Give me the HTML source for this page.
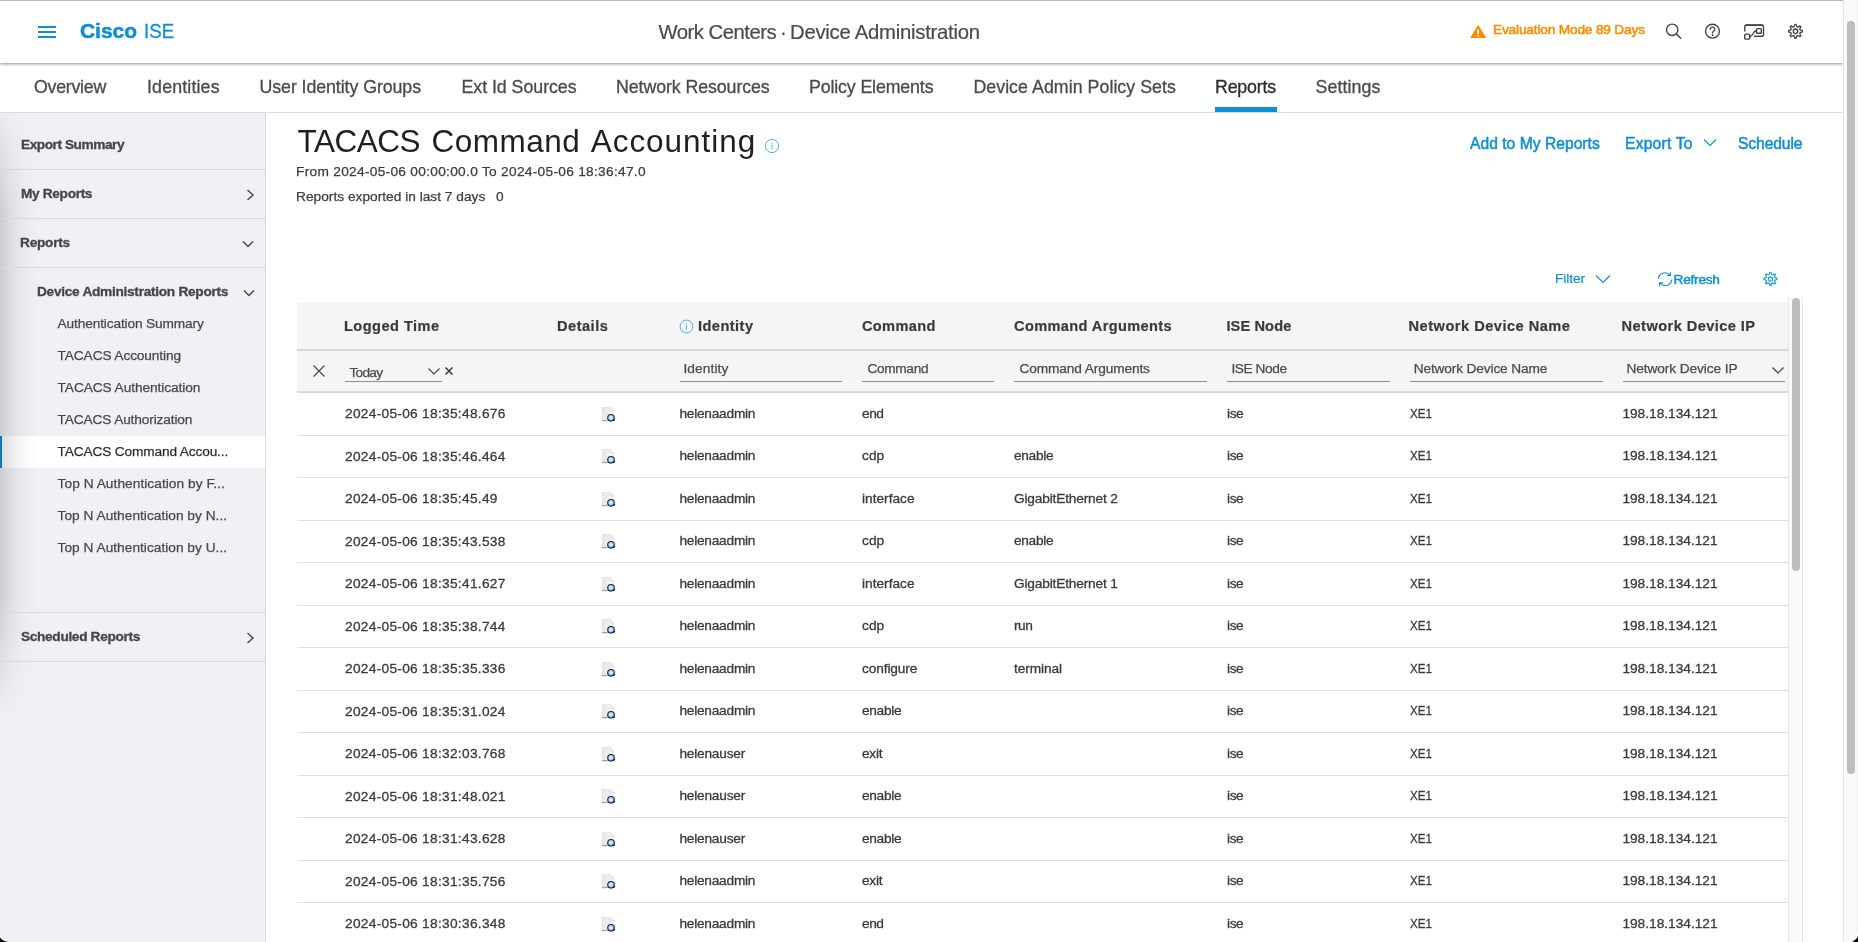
<!DOCTYPE html>
<html lang="en">
<head>
<meta charset="utf-8">
<title>Cisco ISE - TACACS Command Accounting</title>
<style>
*{box-sizing:border-box;margin:0;padding:0}
html,body{width:1858px;height:942px;overflow:hidden;background:#fff}
body{font-family:"Liberation Sans",Arial,sans-serif;color:#3c3c3c;position:relative;font-size:13.7px}
.abs{position:absolute;white-space:nowrap}
#page{position:absolute;left:0;top:0;width:1843px;height:942px;overflow:hidden;background:#fff;will-change:transform}
/* header */
#hdr{position:absolute;left:0;top:0;width:1843px;height:63px;background:#fff;border-top:1px solid #b9b9b9;box-shadow:0 1px 3px rgba(0,0,0,.45);z-index:5}
#tabs{position:absolute;left:0;top:63px;width:1843px;height:50px;background:#fff;border-bottom:1px solid #dcdcdc;z-index:2}
.wc{top:19.7px;font-size:20.3px;line-height:22px;color:#4a4a4a;-webkit-text-stroke:.2px #4a4a4a}
.tab{position:absolute;top:14px;font-size:17.8px;line-height:20px;color:#4a4a4a;white-space:nowrap;-webkit-text-stroke:.3px #4a4a4a}
.tab.act{color:#2b2b2b;-webkit-text-stroke-color:#2b2b2b}
#actbar{position:absolute;left:1215px;top:44px;width:62px;height:5px;background:#0d8fd6}
/* sidebar */
#side{position:absolute;left:0;top:113px;width:266px;height:829px;background:#f0f1f5;border-right:1px solid #d9dadd}
#side .sh{position:absolute;left:0;top:-13px;width:40px;height:620px;background:linear-gradient(to right,rgba(0,0,0,.15),rgba(0,0,0,.065) 30%,rgba(0,0,0,.02) 65%,rgba(0,0,0,0));-webkit-mask-image:linear-gradient(to bottom,transparent 0,#000 18%,#000 80%,transparent 100%);mask-image:linear-gradient(to bottom,transparent 0,#000 18%,#000 80%,transparent 100%)}
.sline{position:absolute;left:0;width:265px;height:1px;background:#d9dadd}
.sb{position:absolute;font-weight:bold;font-size:13.7px;line-height:16px;color:#444549;white-space:nowrap;-webkit-text-stroke:.3px #444549}
.si{position:absolute;left:58px;font-size:13.7px;line-height:16px;color:#47484c;white-space:nowrap;-webkit-text-stroke:.25px #47484c}
#sel{position:absolute;left:0;top:323px;width:265px;height:32px;background:#fff;border-left:2px solid #0d8fd6}
/* main */
.ttl{position:absolute;top:123px;font-size:31.5px;line-height:36px;color:#1f1f1f;white-space:nowrap}
.sub{position:absolute;left:297px;font-size:13.7px;line-height:16px;color:#3c3c3c;white-space:nowrap;-webkit-text-stroke:.25px #3c3c3c}
.lnk{position:absolute;font-size:15.6px;line-height:18px;color:#0d8fd6;white-space:nowrap;-webkit-text-stroke:.5px #0d8fd6}
.lnk2{position:absolute;font-size:13.7px;line-height:16px;color:#0d8fd6;white-space:nowrap;-webkit-text-stroke:.2px #0d8fd6}
/* table */
#thead{position:absolute;left:297px;top:302px;width:1491px;height:49px;background:#f5f5f5;border-bottom:2px solid #d6d6d6}
#tfilt{position:absolute;left:297px;top:351px;width:1491px;height:42px;background:#f5f5f5;border-bottom:2px solid #dadada}
.th{position:absolute;top:317px;font-weight:bold;font-size:14.6px;line-height:18px;color:#3a3a3a;white-space:nowrap;-webkit-text-stroke:.2px #3a3a3a}
.ph{position:absolute;top:361px;font-size:13.7px;line-height:16px;color:#4a4a4a;white-space:nowrap;-webkit-text-stroke:.25px #4a4a4a}
.ul{position:absolute;top:381px;height:1px;background:#8e8e8e}
.row{position:absolute;left:297px;width:1491px;height:1px;background:#dedede}
.c{position:absolute;font-size:13.7px;line-height:16px;color:#3a3a3a;white-space:nowrap;-webkit-text-stroke:.3px #3a3a3a}
.xe{transform:scaleX(.85);transform-origin:0 50%}
.ic{position:absolute;left:601px;width:15px;height:16px}
/* scrollbars */
#vsb{position:absolute;left:1843px;top:0;width:15px;height:942px;background:#fafafa;border-left:1px solid #e4e4e4;border-right:1px solid #f0f0f0}
#vsb i{position:absolute;left:3px;top:21px;width:8px;height:753px;border-radius:4px;background:#bdbdbd}
#isb{position:absolute;left:1788px;top:297px;width:15px;height:645px;background:#fafafa;border-left:1px solid #e6e6e6;border-right:1px solid #e6e6e6}
#isb i{position:absolute;left:3px;top:1px;width:8px;height:273px;border-radius:4px;background:#bdbdbd}
/*LS*/#cisco{letter-spacing:-0.05px}#wc1{letter-spacing:-0.50px}#wc3{letter-spacing:-0.25px}#eval{letter-spacing:-0.18px}#t1{letter-spacing:-0.26px}#t2{letter-spacing:0.15px}#t3{letter-spacing:-0.08px}#t4{letter-spacing:-0.04px}#t5{letter-spacing:-0.09px}#t6{letter-spacing:-0.14px}#t7{letter-spacing:0.04px}#t8{letter-spacing:-0.18px}#t9{letter-spacing:0.08px}#s1{letter-spacing:-0.46px}#s2{letter-spacing:-0.34px}#s3{letter-spacing:-0.25px}#s4{letter-spacing:-0.29px}#s5{letter-spacing:-0.34px}#i1{letter-spacing:-0.14px}#i2{letter-spacing:-0.11px}#i3{letter-spacing:-0.08px}#i4{letter-spacing:-0.14px}#i5{letter-spacing:-0.15px}#i6{letter-spacing:0.05px}#i7{letter-spacing:0.02px}#i8{letter-spacing:0.02px}#tt1{letter-spacing:-0.50px}#tt2{letter-spacing:0.50px}#tt3{letter-spacing:0.97px}#from{letter-spacing:0.30px}#rexp{letter-spacing:0.02px}#l1{letter-spacing:0.04px}#l2{letter-spacing:0.24px}#l3{letter-spacing:-0.08px}#f1{letter-spacing:-0.06px}#f2{letter-spacing:-0.26px}#h1{letter-spacing:0.45px}#h2{letter-spacing:0.49px}#h3{letter-spacing:0.45px}#h4{letter-spacing:0.33px}#h5{letter-spacing:0.36px}#h6{letter-spacing:0.12px}#h7{letter-spacing:0.49px}#h8{letter-spacing:0.43px}#p0{letter-spacing:-0.72px}#p1{letter-spacing:0.12px}#p2{letter-spacing:-0.33px}#p3{letter-spacing:-0.12px}#p4{letter-spacing:-0.41px}#p5{letter-spacing:-0.14px}#p6{letter-spacing:-0.09px}/*LSEND*/
</style>
</head>
<body>
<div id="page">

<!-- HEADER -->
<div id="hdr">
  <svg class="abs" style="left:37px;top:24px" width="20" height="14" viewBox="0 0 20 14"><path d="M1 2h18M1 7h18M1 12h18" stroke="#0d8fd6" stroke-width="2" fill="none"/></svg>
  <div class="abs" id="logo" style="left:80px;top:18px;font-size:21px;line-height:24px;color:#0d8fd6"><b id="cisco" style="-webkit-text-stroke:.5px #0d8fd6">Cisco</b></div>
  <div class="abs" id="ise" style="left:143.800px;top:18px;font-size:21px;line-height:24px;color:#0d8fd6;transform:scaleX(.89);transform-origin:0 50%;-webkit-text-stroke:.3px #0d8fd6">ISE</div>
  <div class="abs wc" id="wc1" style="left:658.5px">Work Centers</div><div class="abs wc" id="wc2" style="left:780px">·</div><div class="abs wc" id="wc3" style="left:790px">Device Administration</div>
  <svg class="abs" style="left:1469.800px;top:23.600px" width="16.400" height="13.700" viewBox="0 0 18 15"><path d="M9 1.2 L16.8 14 H1.2 Z" fill="#fb8c00" stroke="#fb8c00" stroke-width="1.6" stroke-linejoin="round"/><rect x="8.1" y="5" width="1.8" height="5" fill="#fff"/><rect x="8.1" y="11" width="1.8" height="1.8" fill="#fff"/></svg>
  <div class="abs" id="eval" style="left:1493px;top:21px;font-size:13.7px;line-height:16px;color:#fb8c00;-webkit-text-stroke:.55px #fb8c00">Evaluation Mode 89 Days</div>
  <svg class="abs" id="hic" style="left:1655px;top:-1px" width="160" height="63" viewBox="1655 0 160 63" fill="none" stroke="#424242" stroke-linecap="round" stroke-linejoin="round">
    <circle cx="1672.200" cy="29.800" r="5.700" stroke-width="1.400"/><path d="M1676.400 34 L1680.700 38.300" stroke-width="1.500"/>
    <circle cx="1712.500" cy="31.200" r="6.900" stroke-width="1.400"/><path d="M1710.300 29.300 C1710.300 26.500 1714.800 26.500 1714.800 29.200 C1714.800 31 1712.600 31 1712.600 33" stroke-width="1.300"/><circle cx="1712.600" cy="35.200" r=".9" fill="#3c3c3c" stroke="none"/>
    <path d="M1744.800 31 V26.500 Q1744.800 25.200 1746.100 25.200 H1762.200 Q1763.500 25.200 1763.500 26.500 V35 Q1763.500 36.300 1762.200 36.300 H1754.500" stroke-width="1.400"/><path d="M1745.800 24.800 H1762.500" stroke-width="1"/>
    <rect x="1744.700" y="34.100" width="5" height="5" rx="1.200" stroke-width="1.400"/>
    <rect x="1756.500" y="28.600" width="4.800" height="4.700" rx=".9" stroke-width="1.400"/>
    <path d="M1749.800 36.500 C1753.500 36.500 1752.500 30.800 1756.500 30.800" stroke-width="1.400"/>
    <path d="M1794.10 26.71 L1794.89 24.33 L1796.11 24.33 L1796.90 26.71 L1797.75 27.06 L1800.00 25.94 L1800.86 26.80 L1799.74 29.05 L1800.09 29.90 L1802.47 30.69 L1802.47 31.91 L1800.09 32.70 L1799.74 33.55 L1800.86 35.80 L1800.00 36.66 L1797.75 35.54 L1796.90 35.89 L1796.11 38.27 L1794.89 38.27 L1794.10 35.89 L1793.25 35.54 L1791.00 36.66 L1790.14 35.80 L1791.26 33.55 L1790.91 32.70 L1788.53 31.91 L1788.53 30.69 L1790.91 29.90 L1791.26 29.05 L1790.14 26.80 L1791.00 25.94 L1793.25 27.06 Z" stroke-width="1.300"/><circle cx="1795.500" cy="31.300" r="2.300" stroke-width="1.300"/>
  </svg>
</div>

<!-- TABS -->
<div id="tabs">
  <div class="tab" id="t1" style="left:34px">Overview</div>
  <div class="tab" id="t2" style="left:147px">Identities</div>
  <div class="tab" id="t3" style="left:259.5px">User Identity Groups</div>
  <div class="tab" id="t4" style="left:461.5px">Ext Id Sources</div>
  <div class="tab" id="t5" style="left:616px">Network Resources</div>
  <div class="tab" id="t6" style="left:809px">Policy Elements</div>
  <div class="tab" id="t7" style="left:973.4px">Device Admin Policy Sets</div>
  <div class="tab act" id="t8" style="left:1215px">Reports</div>
  <div class="tab" id="t9" style="left:1315.6px">Settings</div>
  <div id="actbar"></div>
</div>

<!-- SIDEBAR -->
<div id="side">
  <div id="sel"></div>
  <div class="sh"></div>
  <div class="sb" id="s1" style="left:21px;top:24px">Export Summary</div>
  <div class="sline" style="top:56px"></div>
  <div class="sb" id="s2" style="left:21px;top:73px">My Reports</div>
  <div class="sline" style="top:105px"></div>
  <div class="sb" id="s3" style="left:20px;top:122px">Reports</div>
  <div class="sline" style="top:154px"></div>
  <div class="sb" id="s4" style="left:37px;top:171px">Device Administration Reports</div>
  <div class="si" id="i1" style="left:57.6px;top:203px">Authentication Summary</div>
  <div class="si" id="i2" style="left:57.6px;top:235px">TACACS Accounting</div>
  <div class="si" id="i3" style="left:57.6px;top:267px">TACACS Authentication</div>
  <div class="si" id="i4" style="left:57.6px;top:299px">TACACS Authorization</div>
  <div class="si" id="i5" style="left:57.6px;top:331px;color:#222">TACACS Command Accou...</div>
  <div class="si" id="i6" style="left:57.6px;top:363px">Top N Authentication by F...</div>
  <div class="si" id="i7" style="left:57.6px;top:395px">Top N Authentication by N...</div>
  <div class="si" id="i8" style="left:57.6px;top:427px">Top N Authentication by U...</div>
  <div class="sline" style="top:499px"></div>
  <div class="sb" id="s5" style="left:21px;top:516px">Scheduled Reports</div>
  <div class="sline" style="top:548px"></div>
  <svg class="abs" style="left:246px;top:75.5px" width="9" height="12" viewBox="0 0 9 12"><path d="M1.500 1 L7 6 L1.500 11" fill="none" stroke="#4a4a4a" stroke-width="1.500"/></svg>
  <svg class="abs" style="left:242px;top:126.5px" width="12" height="8" viewBox="0 0 12 8"><path d="M1 1.500 L6 6.500 L11 1.500" fill="none" stroke="#4a4a4a" stroke-width="1.500"/></svg>
  <svg class="abs" style="left:243px;top:175.5px" width="12" height="8" viewBox="0 0 12 8"><path d="M1 1.500 L6 6.500 L11 1.500" fill="none" stroke="#4a4a4a" stroke-width="1.500"/></svg>
  <svg class="abs" style="left:246px;top:518.5px" width="9" height="12" viewBox="0 0 9 12"><path d="M1.500 1 L7 6 L1.500 11" fill="none" stroke="#4a4a4a" stroke-width="1.500"/></svg>
</div>

<!-- MAIN -->
<div id="main">
  <div class="ttl" id="tt1" style="left:297.5px">TACACS</div><div class="ttl" id="tt2" style="left:431.5px">Command</div><div class="ttl" id="tt3" style="left:590.7px">Accounting</div>
  <svg class="abs" style="left:764px;top:138px" width="16" height="16" viewBox="0 0 16 16"><circle cx="8" cy="8" r="6.600" fill="none" stroke="#4cb5e8" stroke-width="1"/><rect x="7.500" y="6.700" width="1" height="4.800" fill="#4cb5e8"/><rect x="7.500" y="4.600" width="1" height="1.100" fill="#4cb5e8"/></svg>
  <div class="sub" id="from" style="left:296px;top:163.5px">From 2024-05-06 00:00:00.0 To 2024-05-06 18:36:47.0</div>
  <div class="sub" id="rexp" style="left:296px;top:189px">Reports exported in last 7 days</div>
  <div class="sub" id="zero" style="top:189px;left:496px">0</div>

  <div class="lnk" id="l1" style="left:1470px;top:134.5px">Add to My Reports</div>
  <div class="lnk" id="l2" style="left:1625px;top:134.5px">Export To</div>
  <svg class="abs" style="left:1703px;top:137.700px" width="14" height="9" viewBox="0 0 14 9"><path d="M1 1.500 L7 7.500 L13 1.500" fill="none" stroke="#0d8fd6" stroke-width="1.200"/></svg>
  <div class="lnk" id="l3" style="left:1738px;top:134.5px">Schedule</div>

  <div class="lnk2" id="f1" style="left:1555px;top:271px">Filter</div>
  <svg class="abs" style="left:1595px;top:274px" width="16" height="10" viewBox="0 0 16 10"><path d="M1 1.500 L8 8.500 L15 1.500" fill="none" stroke="#0d8fd6" stroke-width="1.200"/></svg>
  <svg class="abs" id="refic" style="left:1656px;top:270.800px" width="18" height="16.400" viewBox="0 0 18 18" preserveAspectRatio="none"><path d="M2.500 8.500 A6.300 6.300 0 0 1 14 4.800 M15.500 9.500 A6.300 6.300 0 0 1 4 13.200" fill="none" stroke="#0d8fd6" stroke-width="1.200"/><path d="M10.800 5 H14.500 V1.300 M7.200 13 H3.500 V16.700" fill="none" stroke="#0d8fd6" stroke-width="1.200"/></svg>
  <div class="lnk2" id="f2" style="left:1673.6px;top:272px;-webkit-text-stroke:.45px #0d8fd6">Refresh</div>
  <svg class="abs" id="gear2" style="left:1760px;top:268px" width="22" height="22" viewBox="1760 268 22 22" fill="none" stroke="#1b98d8" stroke-linejoin="round"><path d="M1769.18 274.60 L1769.92 272.33 L1771.08 272.33 L1771.82 274.60 L1772.61 274.93 L1774.74 273.84 L1775.56 274.66 L1774.47 276.79 L1774.80 277.58 L1777.07 278.32 L1777.07 279.48 L1774.80 280.22 L1774.47 281.01 L1775.56 283.14 L1774.74 283.96 L1772.61 282.87 L1771.82 283.20 L1771.08 285.47 L1769.92 285.47 L1769.18 283.20 L1768.39 282.87 L1766.26 283.96 L1765.44 283.14 L1766.53 281.01 L1766.20 280.22 L1763.93 279.48 L1763.93 278.32 L1766.20 277.58 L1766.53 276.79 L1765.44 274.66 L1766.26 273.84 L1768.39 274.93 Z" stroke-width="1.200"/><circle cx="1770.500" cy="278.900" r="2.100" stroke-width="1.200"/></svg>

  <div id="thead"></div>
  <div id="tfilt"></div>
  <div class="th" id="h1" style="left:344px">Logged Time</div>
  <div class="th" id="h2" style="left:557px">Details</div>
  <svg class="abs" style="left:679px;top:318.500px" width="15" height="15" viewBox="0 0 16 16"><circle cx="8" cy="8" r="6.800" fill="none" stroke="#45b0e6" stroke-width="1"/><rect x="7.500" y="6.700" width="1" height="4.800" fill="#45b0e6"/><rect x="7.500" y="4.500" width="1" height="1.100" fill="#45b0e6"/></svg>
  <div class="th" id="h3" style="left:698px">Identity</div>
  <div class="th" id="h4" style="left:862px">Command</div>
  <div class="th" id="h5" style="left:1014px">Command Arguments</div>
  <div class="th" id="h6" style="left:1226.4px">ISE Node</div>
  <div class="th" id="h7" style="left:1408.6px">Network Device Name</div>
  <div class="th" id="h8" style="left:1621.6px">Network Device IP</div>

  <svg class="abs" style="left:312px;top:364px" width="14" height="14" viewBox="0 0 14 14"><path d="M1.500 1.500 L12.500 12.500 M12.500 1.500 L1.500 12.500" fill="none" stroke="#4a4a4a" stroke-width="1.200"/></svg>
  <div class="ph" id="p0" style="left:349.4px;top:365px">Today</div>
  <svg class="abs" style="left:427px;top:366.700px" width="14" height="9" viewBox="0 0 14 9"><path d="M1.500 1.500 L7 7 L12.500 1.500" fill="none" stroke="#4a4a4a" stroke-width="1.200"/></svg>
  <svg class="abs" style="left:444px;top:366px" width="10" height="10" viewBox="0 0 10 10"><path d="M1.500 1.500 L8.500 8.500 M8.500 1.500 L1.500 8.500" fill="none" stroke="#3c3c3c" stroke-width="1.500"/></svg>
  <div class="ul" style="left:345px;width:97px"></div>
  <div class="ph" id="p1" style="left:683.4px">Identity</div><div class="ul" style="left:680px;width:162px"></div>
  <div class="ph" id="p2" style="left:867.4px">Command</div><div class="ul" style="left:862px;width:132px"></div>
  <div class="ph" id="p3" style="left:1019.5px">Command Arguments</div><div class="ul" style="left:1014px;width:193px"></div>
  <div class="ph" id="p4" style="left:1231.4px">ISE Node</div><div class="ul" style="left:1227px;width:163px"></div>
  <div class="ph" id="p5" style="left:1413.7px">Network Device Name</div><div class="ul" style="left:1410px;width:193px"></div>
  <div class="ph" id="p6" style="left:1626.5px">Network Device IP</div><div class="ul" style="left:1623px;width:162px"></div>
  <svg class="abs" style="left:1771px;top:366px" width="14" height="9" viewBox="0 0 14 9"><path d="M1.500 1.500 L7 7 L12.500 1.500" fill="none" stroke="#3c3c3c" stroke-width="1.200"/></svg>

  <div id="rows">
<div class="c lt" style="left:345px;top:405.5px;letter-spacing:.3px">2024-05-06 18:35:48.676</div>
<svg class="ic" style="top:407px" viewBox="0 0 15 16"><defs><linearGradient id="pg0" x1="0" x2="1" y1="0" y2="0"><stop offset="0" stop-color="#e6e6e6"/><stop offset="1" stop-color="#f7f7f7"/></linearGradient></defs><path d="M1.300 .3 H9 L12.700 4 V13.500 H1.300 Z" fill="url(#pg0)" stroke="#dcdcdc" stroke-width=".6"/><path d="M9 .3 V4 H12.700 Z" fill="#fbfbfb" stroke="#d2d2d2" stroke-width=".6"/><path d="M1 13.700 H6.500" stroke="#8a8a8a" stroke-width=".9"/><circle cx="10" cy="10.800" r="3.300" fill="#a9cbf6" stroke="#1b2438" stroke-width="1.100"/><circle cx="9.800" cy="10.500" r="1.500" fill="#dcebfd"/><path d="M11.500 13.300 Q13.300 13.800 13.600 12" fill="none" stroke="#1b2438" stroke-width="1.300"/></svg>
<div class="c idn" style="left:679.400px;top:405.5px;letter-spacing:-0.23px">helenaadmin</div>
<div class="c cmd" style="left:862px;top:405.5px;letter-spacing:-0.45px">end</div>
<div class="c ise" style="left:1227px;top:405.5px;letter-spacing:-.4px">ise</div>
<div class="c xe" style="left:1409.5px;top:405.5px">XE1</div>
<div class="c ip" style="left:1622.400px;top:405.5px">198.18.134.121</div>
<div class="row" style="top:435px"></div>
<div class="c lt" style="left:345px;top:448.5px;letter-spacing:.3px">2024-05-06 18:35:46.464</div>
<svg class="ic" style="top:449px" viewBox="0 0 15 16"><defs><linearGradient id="pg1" x1="0" x2="1" y1="0" y2="0"><stop offset="0" stop-color="#e6e6e6"/><stop offset="1" stop-color="#f7f7f7"/></linearGradient></defs><path d="M1.300 .3 H9 L12.700 4 V13.500 H1.300 Z" fill="url(#pg1)" stroke="#dcdcdc" stroke-width=".6"/><path d="M9 .3 V4 H12.700 Z" fill="#fbfbfb" stroke="#d2d2d2" stroke-width=".6"/><path d="M1 13.700 H6.500" stroke="#8a8a8a" stroke-width=".9"/><circle cx="10" cy="10.800" r="3.300" fill="#a9cbf6" stroke="#1b2438" stroke-width="1.100"/><circle cx="9.800" cy="10.500" r="1.500" fill="#dcebfd"/><path d="M11.500 13.300 Q13.300 13.800 13.600 12" fill="none" stroke="#1b2438" stroke-width="1.300"/></svg>
<div class="c idn" style="left:679.400px;top:448px;letter-spacing:-0.23px">helenaadmin</div>
<div class="c cmd" style="left:862px;top:448px;letter-spacing:0.05px">cdp</div>
<div class="c arg" style="left:1014px;top:448px;letter-spacing:-0.32px">enable</div>
<div class="c ise" style="left:1227px;top:448px;letter-spacing:-.4px">ise</div>
<div class="c xe" style="left:1409.5px;top:448px">XE1</div>
<div class="c ip" style="left:1622.400px;top:448px">198.18.134.121</div>
<div class="row" style="top:477px"></div>
<div class="c lt" style="left:345px;top:490.5px;letter-spacing:.3px">2024-05-06 18:35:45.49</div>
<svg class="ic" style="top:492px" viewBox="0 0 15 16"><defs><linearGradient id="pg2" x1="0" x2="1" y1="0" y2="0"><stop offset="0" stop-color="#e6e6e6"/><stop offset="1" stop-color="#f7f7f7"/></linearGradient></defs><path d="M1.300 .3 H9 L12.700 4 V13.500 H1.300 Z" fill="url(#pg2)" stroke="#dcdcdc" stroke-width=".6"/><path d="M9 .3 V4 H12.700 Z" fill="#fbfbfb" stroke="#d2d2d2" stroke-width=".6"/><path d="M1 13.700 H6.500" stroke="#8a8a8a" stroke-width=".9"/><circle cx="10" cy="10.800" r="3.300" fill="#a9cbf6" stroke="#1b2438" stroke-width="1.100"/><circle cx="9.800" cy="10.500" r="1.500" fill="#dcebfd"/><path d="M11.500 13.300 Q13.300 13.800 13.600 12" fill="none" stroke="#1b2438" stroke-width="1.300"/></svg>
<div class="c idn" style="left:679.400px;top:490.5px;letter-spacing:-0.23px">helenaadmin</div>
<div class="c cmd" style="left:862px;top:490.5px">interface</div>
<div class="c arg" style="left:1014px;top:490.5px;letter-spacing:-0.17px">GigabitEthernet 2</div>
<div class="c ise" style="left:1227px;top:490.5px;letter-spacing:-.4px">ise</div>
<div class="c xe" style="left:1409.5px;top:490.5px">XE1</div>
<div class="c ip" style="left:1622.400px;top:490.5px">198.18.134.121</div>
<div class="row" style="top:520px"></div>
<div class="c lt" style="left:345px;top:533.5px;letter-spacing:.3px">2024-05-06 18:35:43.538</div>
<svg class="ic" style="top:534px" viewBox="0 0 15 16"><defs><linearGradient id="pg3" x1="0" x2="1" y1="0" y2="0"><stop offset="0" stop-color="#e6e6e6"/><stop offset="1" stop-color="#f7f7f7"/></linearGradient></defs><path d="M1.300 .3 H9 L12.700 4 V13.500 H1.300 Z" fill="url(#pg3)" stroke="#dcdcdc" stroke-width=".6"/><path d="M9 .3 V4 H12.700 Z" fill="#fbfbfb" stroke="#d2d2d2" stroke-width=".6"/><path d="M1 13.700 H6.500" stroke="#8a8a8a" stroke-width=".9"/><circle cx="10" cy="10.800" r="3.300" fill="#a9cbf6" stroke="#1b2438" stroke-width="1.100"/><circle cx="9.800" cy="10.500" r="1.500" fill="#dcebfd"/><path d="M11.500 13.300 Q13.300 13.800 13.600 12" fill="none" stroke="#1b2438" stroke-width="1.300"/></svg>
<div class="c idn" style="left:679.400px;top:533px;letter-spacing:-0.23px">helenaadmin</div>
<div class="c cmd" style="left:862px;top:533px;letter-spacing:0.05px">cdp</div>
<div class="c arg" style="left:1014px;top:533px;letter-spacing:-0.32px">enable</div>
<div class="c ise" style="left:1227px;top:533px;letter-spacing:-.4px">ise</div>
<div class="c xe" style="left:1409.5px;top:533px">XE1</div>
<div class="c ip" style="left:1622.400px;top:533px">198.18.134.121</div>
<div class="row" style="top:562px"></div>
<div class="c lt" style="left:345px;top:575.5px;letter-spacing:.3px">2024-05-06 18:35:41.627</div>
<svg class="ic" style="top:577px" viewBox="0 0 15 16"><defs><linearGradient id="pg4" x1="0" x2="1" y1="0" y2="0"><stop offset="0" stop-color="#e6e6e6"/><stop offset="1" stop-color="#f7f7f7"/></linearGradient></defs><path d="M1.300 .3 H9 L12.700 4 V13.500 H1.300 Z" fill="url(#pg4)" stroke="#dcdcdc" stroke-width=".6"/><path d="M9 .3 V4 H12.700 Z" fill="#fbfbfb" stroke="#d2d2d2" stroke-width=".6"/><path d="M1 13.700 H6.500" stroke="#8a8a8a" stroke-width=".9"/><circle cx="10" cy="10.800" r="3.300" fill="#a9cbf6" stroke="#1b2438" stroke-width="1.100"/><circle cx="9.800" cy="10.500" r="1.500" fill="#dcebfd"/><path d="M11.500 13.300 Q13.300 13.800 13.600 12" fill="none" stroke="#1b2438" stroke-width="1.300"/></svg>
<div class="c idn" style="left:679.400px;top:575.5px;letter-spacing:-0.23px">helenaadmin</div>
<div class="c cmd" style="left:862px;top:575.5px">interface</div>
<div class="c arg" style="left:1014px;top:575.5px;letter-spacing:-0.17px">GigabitEthernet 1</div>
<div class="c ise" style="left:1227px;top:575.5px;letter-spacing:-.4px">ise</div>
<div class="c xe" style="left:1409.5px;top:575.5px">XE1</div>
<div class="c ip" style="left:1622.400px;top:575.5px">198.18.134.121</div>
<div class="row" style="top:605px"></div>
<div class="c lt" style="left:345px;top:618.5px;letter-spacing:.3px">2024-05-06 18:35:38.744</div>
<svg class="ic" style="top:619px" viewBox="0 0 15 16"><defs><linearGradient id="pg5" x1="0" x2="1" y1="0" y2="0"><stop offset="0" stop-color="#e6e6e6"/><stop offset="1" stop-color="#f7f7f7"/></linearGradient></defs><path d="M1.300 .3 H9 L12.700 4 V13.500 H1.300 Z" fill="url(#pg5)" stroke="#dcdcdc" stroke-width=".6"/><path d="M9 .3 V4 H12.700 Z" fill="#fbfbfb" stroke="#d2d2d2" stroke-width=".6"/><path d="M1 13.700 H6.500" stroke="#8a8a8a" stroke-width=".9"/><circle cx="10" cy="10.800" r="3.300" fill="#a9cbf6" stroke="#1b2438" stroke-width="1.100"/><circle cx="9.800" cy="10.500" r="1.500" fill="#dcebfd"/><path d="M11.500 13.300 Q13.300 13.800 13.600 12" fill="none" stroke="#1b2438" stroke-width="1.300"/></svg>
<div class="c idn" style="left:679.400px;top:618px;letter-spacing:-0.23px">helenaadmin</div>
<div class="c cmd" style="left:862px;top:618px;letter-spacing:0.05px">cdp</div>
<div class="c arg" style="left:1014px;top:618px;letter-spacing:-0.45px">run</div>
<div class="c ise" style="left:1227px;top:618px;letter-spacing:-.4px">ise</div>
<div class="c xe" style="left:1409.5px;top:618px">XE1</div>
<div class="c ip" style="left:1622.400px;top:618px">198.18.134.121</div>
<div class="row" style="top:647px"></div>
<div class="c lt" style="left:345px;top:660.5px;letter-spacing:.3px">2024-05-06 18:35:35.336</div>
<svg class="ic" style="top:662px" viewBox="0 0 15 16"><defs><linearGradient id="pg6" x1="0" x2="1" y1="0" y2="0"><stop offset="0" stop-color="#e6e6e6"/><stop offset="1" stop-color="#f7f7f7"/></linearGradient></defs><path d="M1.300 .3 H9 L12.700 4 V13.500 H1.300 Z" fill="url(#pg6)" stroke="#dcdcdc" stroke-width=".6"/><path d="M9 .3 V4 H12.700 Z" fill="#fbfbfb" stroke="#d2d2d2" stroke-width=".6"/><path d="M1 13.700 H6.500" stroke="#8a8a8a" stroke-width=".9"/><circle cx="10" cy="10.800" r="3.300" fill="#a9cbf6" stroke="#1b2438" stroke-width="1.100"/><circle cx="9.800" cy="10.500" r="1.500" fill="#dcebfd"/><path d="M11.500 13.300 Q13.300 13.800 13.600 12" fill="none" stroke="#1b2438" stroke-width="1.300"/></svg>
<div class="c idn" style="left:679.400px;top:660.5px;letter-spacing:-0.23px">helenaadmin</div>
<div class="c cmd" style="left:862px;top:660.5px;letter-spacing:-0.11px">configure</div>
<div class="c arg" style="left:1014px;top:660.5px;letter-spacing:-0.1px">terminal</div>
<div class="c ise" style="left:1227px;top:660.5px;letter-spacing:-.4px">ise</div>
<div class="c xe" style="left:1409.5px;top:660.5px">XE1</div>
<div class="c ip" style="left:1622.400px;top:660.5px">198.18.134.121</div>
<div class="row" style="top:690px"></div>
<div class="c lt" style="left:345px;top:703.5px;letter-spacing:.3px">2024-05-06 18:35:31.024</div>
<svg class="ic" style="top:704px" viewBox="0 0 15 16"><defs><linearGradient id="pg7" x1="0" x2="1" y1="0" y2="0"><stop offset="0" stop-color="#e6e6e6"/><stop offset="1" stop-color="#f7f7f7"/></linearGradient></defs><path d="M1.300 .3 H9 L12.700 4 V13.500 H1.300 Z" fill="url(#pg7)" stroke="#dcdcdc" stroke-width=".6"/><path d="M9 .3 V4 H12.700 Z" fill="#fbfbfb" stroke="#d2d2d2" stroke-width=".6"/><path d="M1 13.700 H6.500" stroke="#8a8a8a" stroke-width=".9"/><circle cx="10" cy="10.800" r="3.300" fill="#a9cbf6" stroke="#1b2438" stroke-width="1.100"/><circle cx="9.800" cy="10.500" r="1.500" fill="#dcebfd"/><path d="M11.500 13.300 Q13.300 13.800 13.600 12" fill="none" stroke="#1b2438" stroke-width="1.300"/></svg>
<div class="c idn" style="left:679.400px;top:703px;letter-spacing:-0.23px">helenaadmin</div>
<div class="c cmd" style="left:862px;top:703px;letter-spacing:-0.32px">enable</div>
<div class="c ise" style="left:1227px;top:703px;letter-spacing:-.4px">ise</div>
<div class="c xe" style="left:1409.5px;top:703px">XE1</div>
<div class="c ip" style="left:1622.400px;top:703px">198.18.134.121</div>
<div class="row" style="top:732px"></div>
<div class="c lt" style="left:345px;top:745.5px;letter-spacing:.3px">2024-05-06 18:32:03.768</div>
<svg class="ic" style="top:747px" viewBox="0 0 15 16"><defs><linearGradient id="pg8" x1="0" x2="1" y1="0" y2="0"><stop offset="0" stop-color="#e6e6e6"/><stop offset="1" stop-color="#f7f7f7"/></linearGradient></defs><path d="M1.300 .3 H9 L12.700 4 V13.500 H1.300 Z" fill="url(#pg8)" stroke="#dcdcdc" stroke-width=".6"/><path d="M9 .3 V4 H12.700 Z" fill="#fbfbfb" stroke="#d2d2d2" stroke-width=".6"/><path d="M1 13.700 H6.500" stroke="#8a8a8a" stroke-width=".9"/><circle cx="10" cy="10.800" r="3.300" fill="#a9cbf6" stroke="#1b2438" stroke-width="1.100"/><circle cx="9.800" cy="10.500" r="1.500" fill="#dcebfd"/><path d="M11.500 13.300 Q13.300 13.800 13.600 12" fill="none" stroke="#1b2438" stroke-width="1.300"/></svg>
<div class="c idn" style="left:679.400px;top:745.5px;letter-spacing:-0.21px">helenauser</div>
<div class="c cmd" style="left:862px;top:745.5px;letter-spacing:-0.27px">exit</div>
<div class="c ise" style="left:1227px;top:745.5px;letter-spacing:-.4px">ise</div>
<div class="c xe" style="left:1409.5px;top:745.5px">XE1</div>
<div class="c ip" style="left:1622.400px;top:745.5px">198.18.134.121</div>
<div class="row" style="top:775px"></div>
<div class="c lt" style="left:345px;top:788.5px;letter-spacing:.3px">2024-05-06 18:31:48.021</div>
<svg class="ic" style="top:789px" viewBox="0 0 15 16"><defs><linearGradient id="pg9" x1="0" x2="1" y1="0" y2="0"><stop offset="0" stop-color="#e6e6e6"/><stop offset="1" stop-color="#f7f7f7"/></linearGradient></defs><path d="M1.300 .3 H9 L12.700 4 V13.500 H1.300 Z" fill="url(#pg9)" stroke="#dcdcdc" stroke-width=".6"/><path d="M9 .3 V4 H12.700 Z" fill="#fbfbfb" stroke="#d2d2d2" stroke-width=".6"/><path d="M1 13.700 H6.500" stroke="#8a8a8a" stroke-width=".9"/><circle cx="10" cy="10.800" r="3.300" fill="#a9cbf6" stroke="#1b2438" stroke-width="1.100"/><circle cx="9.800" cy="10.500" r="1.500" fill="#dcebfd"/><path d="M11.500 13.300 Q13.300 13.800 13.600 12" fill="none" stroke="#1b2438" stroke-width="1.300"/></svg>
<div class="c idn" style="left:679.400px;top:788px;letter-spacing:-0.21px">helenauser</div>
<div class="c cmd" style="left:862px;top:788px;letter-spacing:-0.32px">enable</div>
<div class="c ise" style="left:1227px;top:788px;letter-spacing:-.4px">ise</div>
<div class="c xe" style="left:1409.5px;top:788px">XE1</div>
<div class="c ip" style="left:1622.400px;top:788px">198.18.134.121</div>
<div class="row" style="top:817px"></div>
<div class="c lt" style="left:345px;top:830.5px;letter-spacing:.3px">2024-05-06 18:31:43.628</div>
<svg class="ic" style="top:832px" viewBox="0 0 15 16"><defs><linearGradient id="pg10" x1="0" x2="1" y1="0" y2="0"><stop offset="0" stop-color="#e6e6e6"/><stop offset="1" stop-color="#f7f7f7"/></linearGradient></defs><path d="M1.300 .3 H9 L12.700 4 V13.500 H1.300 Z" fill="url(#pg10)" stroke="#dcdcdc" stroke-width=".6"/><path d="M9 .3 V4 H12.700 Z" fill="#fbfbfb" stroke="#d2d2d2" stroke-width=".6"/><path d="M1 13.700 H6.500" stroke="#8a8a8a" stroke-width=".9"/><circle cx="10" cy="10.800" r="3.300" fill="#a9cbf6" stroke="#1b2438" stroke-width="1.100"/><circle cx="9.800" cy="10.500" r="1.500" fill="#dcebfd"/><path d="M11.500 13.300 Q13.300 13.800 13.600 12" fill="none" stroke="#1b2438" stroke-width="1.300"/></svg>
<div class="c idn" style="left:679.400px;top:830.5px;letter-spacing:-0.21px">helenauser</div>
<div class="c cmd" style="left:862px;top:830.5px;letter-spacing:-0.32px">enable</div>
<div class="c ise" style="left:1227px;top:830.5px;letter-spacing:-.4px">ise</div>
<div class="c xe" style="left:1409.5px;top:830.5px">XE1</div>
<div class="c ip" style="left:1622.400px;top:830.5px">198.18.134.121</div>
<div class="row" style="top:860px"></div>
<div class="c lt" style="left:345px;top:873.5px;letter-spacing:.3px">2024-05-06 18:31:35.756</div>
<svg class="ic" style="top:874px" viewBox="0 0 15 16"><defs><linearGradient id="pg11" x1="0" x2="1" y1="0" y2="0"><stop offset="0" stop-color="#e6e6e6"/><stop offset="1" stop-color="#f7f7f7"/></linearGradient></defs><path d="M1.300 .3 H9 L12.700 4 V13.500 H1.300 Z" fill="url(#pg11)" stroke="#dcdcdc" stroke-width=".6"/><path d="M9 .3 V4 H12.700 Z" fill="#fbfbfb" stroke="#d2d2d2" stroke-width=".6"/><path d="M1 13.700 H6.500" stroke="#8a8a8a" stroke-width=".9"/><circle cx="10" cy="10.800" r="3.300" fill="#a9cbf6" stroke="#1b2438" stroke-width="1.100"/><circle cx="9.800" cy="10.500" r="1.500" fill="#dcebfd"/><path d="M11.500 13.300 Q13.300 13.800 13.600 12" fill="none" stroke="#1b2438" stroke-width="1.300"/></svg>
<div class="c idn" style="left:679.400px;top:873px;letter-spacing:-0.23px">helenaadmin</div>
<div class="c cmd" style="left:862px;top:873px;letter-spacing:-0.27px">exit</div>
<div class="c ise" style="left:1227px;top:873px;letter-spacing:-.4px">ise</div>
<div class="c xe" style="left:1409.5px;top:873px">XE1</div>
<div class="c ip" style="left:1622.400px;top:873px">198.18.134.121</div>
<div class="row" style="top:902px"></div>
<div class="c lt" style="left:345px;top:915.5px;letter-spacing:.3px">2024-05-06 18:30:36.348</div>
<svg class="ic" style="top:917px" viewBox="0 0 15 16"><defs><linearGradient id="pg12" x1="0" x2="1" y1="0" y2="0"><stop offset="0" stop-color="#e6e6e6"/><stop offset="1" stop-color="#f7f7f7"/></linearGradient></defs><path d="M1.300 .3 H9 L12.700 4 V13.500 H1.300 Z" fill="url(#pg12)" stroke="#dcdcdc" stroke-width=".6"/><path d="M9 .3 V4 H12.700 Z" fill="#fbfbfb" stroke="#d2d2d2" stroke-width=".6"/><path d="M1 13.700 H6.500" stroke="#8a8a8a" stroke-width=".9"/><circle cx="10" cy="10.800" r="3.300" fill="#a9cbf6" stroke="#1b2438" stroke-width="1.100"/><circle cx="9.800" cy="10.500" r="1.500" fill="#dcebfd"/><path d="M11.500 13.300 Q13.300 13.800 13.600 12" fill="none" stroke="#1b2438" stroke-width="1.300"/></svg>
<div class="c idn" style="left:679.400px;top:915.5px;letter-spacing:-0.23px">helenaadmin</div>
<div class="c cmd" style="left:862px;top:915.5px;letter-spacing:-0.45px">end</div>
<div class="c ise" style="left:1227px;top:915.5px;letter-spacing:-.4px">ise</div>
<div class="c xe" style="left:1409.5px;top:915.5px">XE1</div>
<div class="c ip" style="left:1622.400px;top:915.5px">198.18.134.121</div>
</div><!--ROWS_END-->
</div>

<div id="isb"><i></i></div>
</div>
<div id="vsb"><i></i></div>
<svg class="abs" style="left:1846.700px;top:930.700px" width="12" height="12" viewBox="0 0 12 12"><path d="M12 0 A12 12 0 0 1 0 12 H12 Z" fill="#000"/><path d="M11.300 0 A11.300 11.300 0 0 1 0 11.300" fill="none" stroke="#fff" stroke-width="1"/></svg>
<svg class="abs" style="left:0;top:936px" width="10" height="6" viewBox="0 0 10 6"><path d="M0 1.200 Q2.500 5.500 9 6 H0 Z" fill="#000"/><path d="M0 .5 Q2.800 5 9.500 5.600" fill="none" stroke="#fff" stroke-width=".5"/></svg>
</body>
</html>
